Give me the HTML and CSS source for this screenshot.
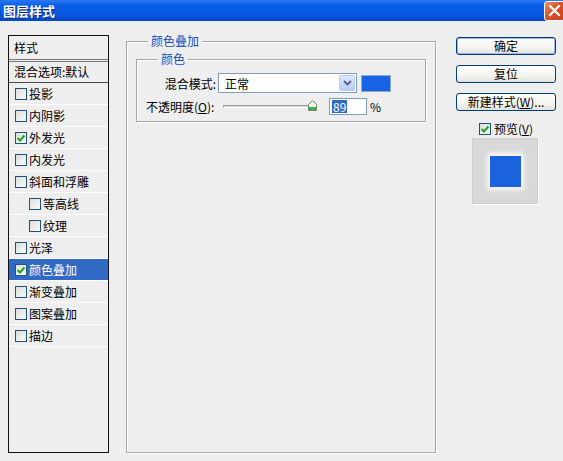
FILE: index.html
```html
<!DOCTYPE html>
<html lang="zh-CN">
<head>
<meta charset="utf-8">
<title>图层样式</title>
<link rel="stylesheet" href="styles.css">
</head>
<body>
<div class="window">
  <div class="titlebar">
    <span class="title">图层样式</span>
    <span class="close"><svg width="13" height="13" viewBox="0 0 13 13"><path d="M2 2 L11 11 M11 2 L2 11" stroke="#fff" stroke-width="2.2" stroke-linecap="square"/></svg></span>
  </div>
  <div class="content">
    <div class="list">
      <div class="list-head">样式</div>
      <div class="list-blend">混合选项:默认</div>
      <div class="item"><span class="cb"></span>投影</div>
      <div class="item"><span class="cb"></span>内阴影</div>
      <div class="item"><span class="cb checked"><svg width="10" height="10" viewBox="0 0 10 10"><path d="M1.5 5 L4 7.5 L8.5 2.5" fill="none" stroke="#21a121" stroke-width="2"/></svg></span>外发光</div>
      <div class="item"><span class="cb"></span>内发光</div>
      <div class="item"><span class="cb"></span>斜面和浮雕</div>
      <div class="item sub"><span class="cb"></span>等高线</div>
      <div class="item sub"><span class="cb"></span>纹理</div>
      <div class="item"><span class="cb"></span>光泽</div>
      <div class="item selected"><span class="cb checked"><svg width="10" height="10" viewBox="0 0 10 10"><path d="M1.5 5 L4 7.5 L8.5 2.5" fill="none" stroke="#21a121" stroke-width="2"/></svg></span>颜色叠加</div>
      <div class="item"><span class="cb"></span>渐变叠加</div>
      <div class="item"><span class="cb"></span>图案叠加</div>
      <div class="item"><span class="cb"></span>描边</div>
    </div>

    <fieldset class="group outer">
      <legend>颜色叠加</legend>
      <fieldset class="group inner">
        <legend>颜色</legend>
        <div class="row">
          <span class="label right">混合模式:</span>
          <div class="select">
            <span class="select-text">正常</span>
            <span class="select-btn"><svg width="9" height="6" viewBox="0 0 9 6"><path d="M1 1 L4.5 4.5 L8 1" fill="none" stroke="#4d6185" stroke-width="1.8"/></svg></span>
          </div>
          <span class="swatch"></span>
        </div>
        <div class="row row2">
          <span class="label">不透明度(<u>O</u>):</span>
          <div class="slider">
            <div class="track"></div>
            <svg class="thumb" width="9" height="11" viewBox="0 0 9 11"><path d="M0.5 10.5 V4.5 L4.5 0.5 L8.5 4.5 V10.5 Z" fill="#f4f4f0" stroke="#6f8a6a"/><rect x="1" y="7" width="7" height="3" fill="#3fb14b"/></svg>
          </div>
          <span class="num"><span class="sel">89</span></span>
          <span class="pct">%</span>
        </div>
      </fieldset>
    </fieldset>

    <div class="side">
      <div class="btn default">确定</div>
      <div class="btn">复位</div>
      <div class="btn">新建样式(<u>W</u>)...</div>
      <div class="preview-row"><span class="cb checked"><svg width="10" height="10" viewBox="0 0 10 10"><path d="M1.5 5 L4 7.5 L8.5 2.5" fill="none" stroke="#21a121" stroke-width="2"/></svg></span>预览(<u>V</u>)</div>
      <div class="preview"><span class="preview-sq"></span></div>
    </div>
  </div>
</div>
</body>
</html>
```

FILE: styles.css
```css
* { box-sizing: border-box; }
html, body { margin: 0; padding: 0; }
body {
  width: 563px;
  height: 461px;
  overflow: hidden;
  background: #eeeeee;
  font-family: "Noto Sans CJK SC", "Liberation Sans", sans-serif;
  font-size: 12px;
  color: #000;
}
.window {
  width: 563px;
  height: 461px;
  display: flex;
  flex-direction: column;
  overflow: hidden;
}
.titlebar {
  height: 21px;
  flex: none;
  display: flex;
  align-items: center;
  justify-content: space-between;
  background: linear-gradient(#2a78f2 0%, #0a5ee8 25%, #0656e2 70%, #0348c8 100%);
  padding-left: 3px;
}
.title {
  color: #fff;
  font-weight: bold;
  font-size: 13px;
  line-height: 21px;
  text-shadow: 1px 1px 0 #0a2a80;
}
.close {
  width: 21px;
  height: 20px;
  margin-right: -2px;
  border: 1px solid #fff;
  border-radius: 3px;
  background: linear-gradient(135deg, #ec8c6c 0%, #d9532e 45%, #c23d18 100%);
  display: flex;
  align-items: center;
  justify-content: center;
}
.content {
  flex: 1;
  display: flex;
  align-items: stretch;
  padding: 0 0 8px 8px;
}
/* left list */
.list {
  width: 101px;
  margin-top: 14px;
  border: 1px solid #111;
  background: #eeeeee;
  display: flex;
  flex-direction: column;
}
.list-head {
  height: 26px;
  padding-left: 5px;
  line-height: 23px;
  border-bottom: 3px double #777;
}
.list-blend {
  height: 21px;
  padding-left: 5px;
  line-height: 20px;
  border-bottom: 1px solid #4a4a4a;
}
.item {
  height: 22px;
  display: flex;
  align-items: center;
  padding-left: 6px;
  border-bottom: 1px solid #fff;
  white-space: nowrap;
}
.item.sub { padding-left: 20px; }
.item.selected {
  background: #316ac5;
  color: #fff;
}
.cb {
  width: 12px;
  height: 12px;
  flex: none;
  border: 1px solid #1c5180;
  background: linear-gradient(135deg, #dcdcd7 0%, #fbfbf9 100%);
  margin-right: 2px;
  display: flex;
  align-items: center;
  justify-content: center;
}
/* group boxes */
.group {
  margin: 0;
  min-width: 0;
  border: 1px solid #a6a6a6;
  box-shadow: inset 1px 1px 0 #fff, 1px 1px 0 #fff;
}
.group legend {
  color: #1c4bb8;
  line-height: 14px;
  padding: 0 3px;
}
.outer {
  width: 310px;
  margin-top: 13px;
  margin-left: 17px;
  padding: 4px 9px 0 9px;
}
.outer > legend { margin-left: 12px; }
.inner {
  width: 290px;
  padding: 7px 0 6px 9px;
}
.inner > legend { margin-left: 12px; }
.row {
  display: flex;
  align-items: center;
  height: 20px;
}
.row2 {
  margin-top: 5px;
  height: 17px;
}
.label {
  width: 70px;
  white-space: nowrap;
  flex: none;
}
.label.right { text-align: right; }
.select {
  width: 139px;
  height: 20px;
  margin-left: 2px;
  border: 1px solid #7f9db9;
  background: #fff;
  display: flex;
  align-items: center;
  justify-content: space-between;
  padding: 1px;
}
.select-text { padding-left: 5px; }
.select-btn {
  width: 16px;
  height: 16px;
  border: 1px solid #b8cbf5;
  border-radius: 2px;
  background: linear-gradient(#dfe8fd, #b7cbf7);
  display: flex;
  align-items: center;
  justify-content: center;
}
.swatch {
  width: 30px;
  height: 17px;
  margin-left: 4px;
  background: #1763e6;
  border: 1px solid #8ea7c9;
}
.slider {
  width: 94px;
  height: 17px;
  margin-left: 7px;
  position: relative;
  display: flex;
  align-items: center;
}
.track {
  width: 100%;
  height: 3px;
  border-top: 1px solid #9a9a9a;
  border-bottom: 1px solid #fff;
  background: #d8d8d8;
  border-left: 1px solid #9a9a9a;
}
.thumb {
  position: absolute;
  left: 85px;
  top: 2px;
}
.num {
  width: 38px;
  height: 17px;
  margin-left: 12px;
  border: 1px solid #7f9db9;
  background: #fff;
  display: flex;
  align-items: center;
  padding-left: 2px;
}
.sel {
  background: #316ac5;
  color: #fff;
  line-height: 13px;
  padding: 0 1px;
}
.pct { margin-left: 3px; }
/* right side */
.side {
  width: 100px;
  margin-left: 20px;
  margin-top: 16px;
  align-self: flex-start;
  display: flex;
  flex-direction: column;
}
.btn {
  height: 18px;
  margin-bottom: 10px;
  border: 1px solid #003c74;
  border-radius: 3px;
  background: linear-gradient(#ffffff 0%, #f4f4f0 60%, #e3e3db 100%);
  display: flex;
  align-items: center;
  justify-content: center;
  line-height: 16px;
  white-space: nowrap;
}
.btn.default {
  box-shadow: inset 0 0 0 1px #9ab5e6;
}
.preview-row {
  margin-top: 1px;
  height: 13px;
  display: flex;
  align-items: center;
  justify-content: center;
  line-height: 13px;
}
.preview-row .cb { margin-right: 3px; }
.preview {
  width: 66px;
  height: 66px;
  margin: 3px 0 0 16px;
  background: #d8d8d8;
  border: 1px solid #cfcfcf;
  box-shadow: 1px 1px 0 #fff;
  display: flex;
  align-items: center;
  justify-content: center;
}
.preview-sq {
  width: 31px;
  height: 31px;
  background: #1a63dc;
  box-shadow: 0 0 5px 3px #fafafa;
}
```
